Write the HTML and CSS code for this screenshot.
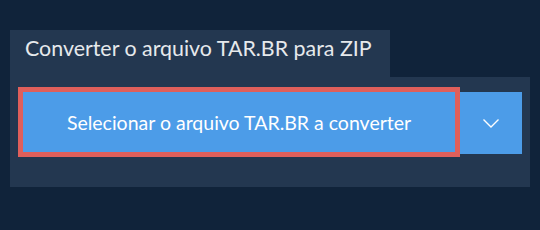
FILE: index.html
```html
<!DOCTYPE html>
<html lang="pt">
<head>
    <meta charset="UTF-8">
    <title>Converter TAR.BR para ZIP</title>
    <link rel="stylesheet" href="styles.css">
</head>
<body>
    <div class="converter">
        <div class="tab">Converter o arquivo TAR.BR para ZIP</div>
        <div class="panel">
            <div class="row">
                <button class="select-btn">Selecionar o arquivo TAR.BR a converter</button>
                <button class="more-btn">
                    <svg width="16" height="9" viewBox="0 0 16 9">
                        <polyline points="0.5,0.5 8,8 15.5,0.5" fill="none" stroke="#fff" stroke-width="1.4"/>
                    </svg>
                </button>
            </div>
        </div>
    </div>
</body>
</html>
```
FILE: styles.css
```css
body {
    margin: 0;
    background-color: #10233a;
    font-family: Lato, "Open Sans", sans-serif;
}
.converter {
    padding: 30px 10px 0 10px;
}
.tab {
    display: inline-block;
    background-color: #233750;
    color: #e6e9ec;
    font-size: 21.4px;
    height: 47px;
    width: 380px;
    line-height: 36px;
    padding: 0 0 0 15px;
    box-sizing: border-box;
    white-space: nowrap;
    vertical-align: top;
}
.panel {
    background-color: #233750;
    padding: 10px 8px 30px 8px;
}
.row {
    display: flex;
    align-items: flex-start;
}
.select-btn {
    width: 442px;
    height: 70px;
    background-color: #4c9ce8;
    border: 5px solid #df5f5b;
    color: #fff;
    font-family: Lato, "Open Sans", sans-serif;
    font-size: 19.5px;
    padding: 0;
    cursor: pointer;
}
.more-btn {
    width: 62px;
    height: 62px;
    margin-top: 5px;
    background-color: #4c9ce8;
    border: none;
    padding: 0;
    display: flex;
    align-items: center;
    justify-content: center;
    cursor: pointer;
}
```
